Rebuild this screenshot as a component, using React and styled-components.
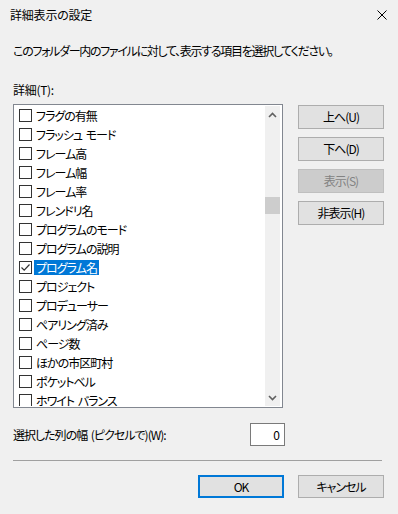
import React from "react";
import styled, { createGlobalStyle } from "styled-components";

const Global = createGlobalStyle`
  html, body { margin: 0; padding: 0; background: #f0f0f0; }
  body {
    font-family: "Noto Sans CJK JP", "Noto Sans", sans-serif;
    font-size: 12px;
    color: #000;
  }
  * { box-sizing: border-box; }
`;

const Dialog = styled.div`
  width: 398px;
  height: 514px;
  background: #f0f0f0;
  display: flex;
  flex-direction: column;
  font-feature-settings: "palt";
  letter-spacing: -1px;
  word-spacing: 2px;
`;

const TitleBar = styled.div`
  height: 30px;
  display: flex;
  align-items: center;
  justify-content: space-between;
  padding: 0 11px 0 10px;
  line-height: 16px;
  letter-spacing: -0.2px;
`;

const CloseButton = styled.div`
  width: 10px;
  height: 10px;
  display: flex;
`;

const Body = styled.div`
  padding: 0 14px 0 13px;
  display: flex;
  flex-direction: column;
`;

const Text = styled.div`
  line-height: 16px;
  height: 16px;
  white-space: nowrap;
  margin-top: ${(p) => p.$mt || 0}px;
  letter-spacing: ${(p) => p.$ls ?? -1}px;
`;

const MainRow = styled.div`
  display: flex;
  gap: 15px;
  margin-top: 6px;
`;

const ListBox = styled.div`
  width: 270px;
  height: 304px;
  border: 1px solid #828790;
  background: #fff;
  display: flex;
  padding: 1px 1px 1px 0;
  overflow: hidden;
`;

const Items = styled.div`
  flex: 1;
  display: flex;
  flex-direction: column;
  overflow: hidden;
`;

const Row = styled.div`
  height: 19px;
  flex: 0 0 19px;
  display: flex;
  align-items: center;
  padding-left: 5px;
`;

const Box = styled.div`
  width: 13px;
  height: 13px;
  border: 1px solid #333;
  background: #fff;
  display: flex;
  align-items: center;
  justify-content: center;
  flex: 0 0 13px;
`;

const Label = styled.span`
  margin-left: 2px;
  padding: 0 2px 0 2px;
  line-height: 15px;
  height: 15px;
  white-space: nowrap;
  background: ${(p) => (p.$selected ? "#0078d7" : "transparent")};
  color: ${(p) => (p.$selected ? "#fff" : "#000")};
`;

const ScrollBar = styled.div`
  width: 15px;
  margin-right: 1px;
  background: #f0f0f0;
  display: flex;
  flex-direction: column;
  align-items: center;
`;

const ArrowBtn = styled.div`
  width: 15px;
  height: 17px;
  display: flex;
  align-items: center;
  justify-content: center;
  flex: 0 0 17px;
`;

const Track = styled.div`
  flex: 1;
  width: 100%;
  display: flex;
  flex-direction: column;
`;

const Thumb = styled.div`
  width: 100%;
  height: 17px;
  margin-top: ${(p) => p.$offset}px;
  background: #cdcdcd;
`;

const ButtonCol = styled.div`
  display: flex;
  flex-direction: column;
  gap: 8px;
  padding-top: 1px;
`;

const Button = styled.div`
  width: 86px;
  height: ${(p) => p.$h || 24}px;
  display: flex;
  align-items: center;
  justify-content: center;
  background: ${(p) => (p.$disabled ? "#cccccc" : "#e1e1e1")};
  border: ${(p) =>
    p.$default ? "2px solid #0078d7" : p.$disabled ? "1px solid #bfbfbf" : "1px solid #adadad"};
  color: ${(p) => (p.$disabled ? "#838383" : "#000")};
  line-height: 16px;
  white-space: nowrap;
`;

const WidthRow = styled.div`
  display: flex;
  align-items: center;
  justify-content: space-between;
  margin-top: 15px;
  width: 272px;
`;

const NumInput = styled.div`
  width: 35px;
  height: 23px;
  border: 1px solid #7a7a7a;
  background: #fff;
  display: flex;
  align-items: center;
  justify-content: flex-end;
  padding-right: 5px;
  line-height: 16px;
`;

const Separator = styled.div`
  height: 1px;
  background: #a0a0a0;
  margin-top: 14px;
  width: 369px;
`;

const Footer = styled.div`
  display: flex;
  justify-content: flex-end;
  gap: 14px;
  margin-top: 14px;
`;

const items = [
  "フラグの有無",
  "フラッシュ モード",
  "フレーム高",
  "フレーム幅",
  "フレーム率",
  "フレンドリ名",
  "プログラムのモード",
  "プログラムの説明",
  "プログラム名",
  "プロジェクト",
  "プロデューサー",
  "ペアリング済み",
  "ページ数",
  "ほかの市区町村",
  "ポケットベル",
  "ホワイト バランス",
];

const Check = () => (
  <svg width="11" height="11" viewBox="0 0 11 11">
    <polyline points="1.5,5.5 4.2,8.2 9.5,2.5" fill="none" stroke="#333" strokeWidth="1.2" />
  </svg>
);

const Chevron = ({ down }) => (
  <svg width="9" height="6" viewBox="0 0 9 6">
    <polyline
      points={down ? "1,1 4.5,4.5 8,1" : "1,5 4.5,1.5 8,5"}
      fill="none"
      stroke="#606060"
      strokeWidth="1.6"
    />
  </svg>
);

export default function App() {
  return (
    <>
      <Global />
      <Dialog>
        <TitleBar>
          <span>詳細表示の設定</span>
          <CloseButton>
            <svg width="10" height="10" viewBox="0 0 10 10">
              <path d="M0.5 0.5 L9.5 9.5 M9.5 0.5 L0.5 9.5" stroke="#000" strokeWidth="1" />
            </svg>
          </CloseButton>
        </TitleBar>
        <Body>
          <Text $mt={13} $ls={-1.3}>
            このフォルダー内のファイルに対して、表示する項目を選択してください。
          </Text>
          <Text $mt={23} $ls={-0.3}>詳細(T):</Text>
          <MainRow>
            <ListBox>
              <Items>
                {items.map((name) => {
                  const sel = name === "プログラム名";
                  return (
                    <Row key={name}>
                      <Box>{sel && <Check />}</Box>
                      <Label $selected={sel}>{name}</Label>
                    </Row>
                  );
                })}
              </Items>
              <ScrollBar>
                <ArrowBtn>
                  <Chevron />
                </ArrowBtn>
                <Track>
                  <Thumb $offset={74} />
                </Track>
                <ArrowBtn>
                  <Chevron down />
                </ArrowBtn>
              </ScrollBar>
            </ListBox>
            <ButtonCol>
              <Button>上へ(U)</Button>
              <Button>下へ(D)</Button>
              <Button $disabled>表示(S)</Button>
              <Button>非表示(H)</Button>
            </ButtonCol>
          </MainRow>
          <WidthRow>
            <span>選択した列の幅 (ピクセルで)(W):</span>
            <NumInput>0</NumInput>
          </WidthRow>
          <Separator />
          <Footer>
            <Button $default $h={23}>OK</Button>
            <Button $h={23}>キャンセル</Button>
          </Footer>
        </Body>
      </Dialog>
    </>
  );
}
